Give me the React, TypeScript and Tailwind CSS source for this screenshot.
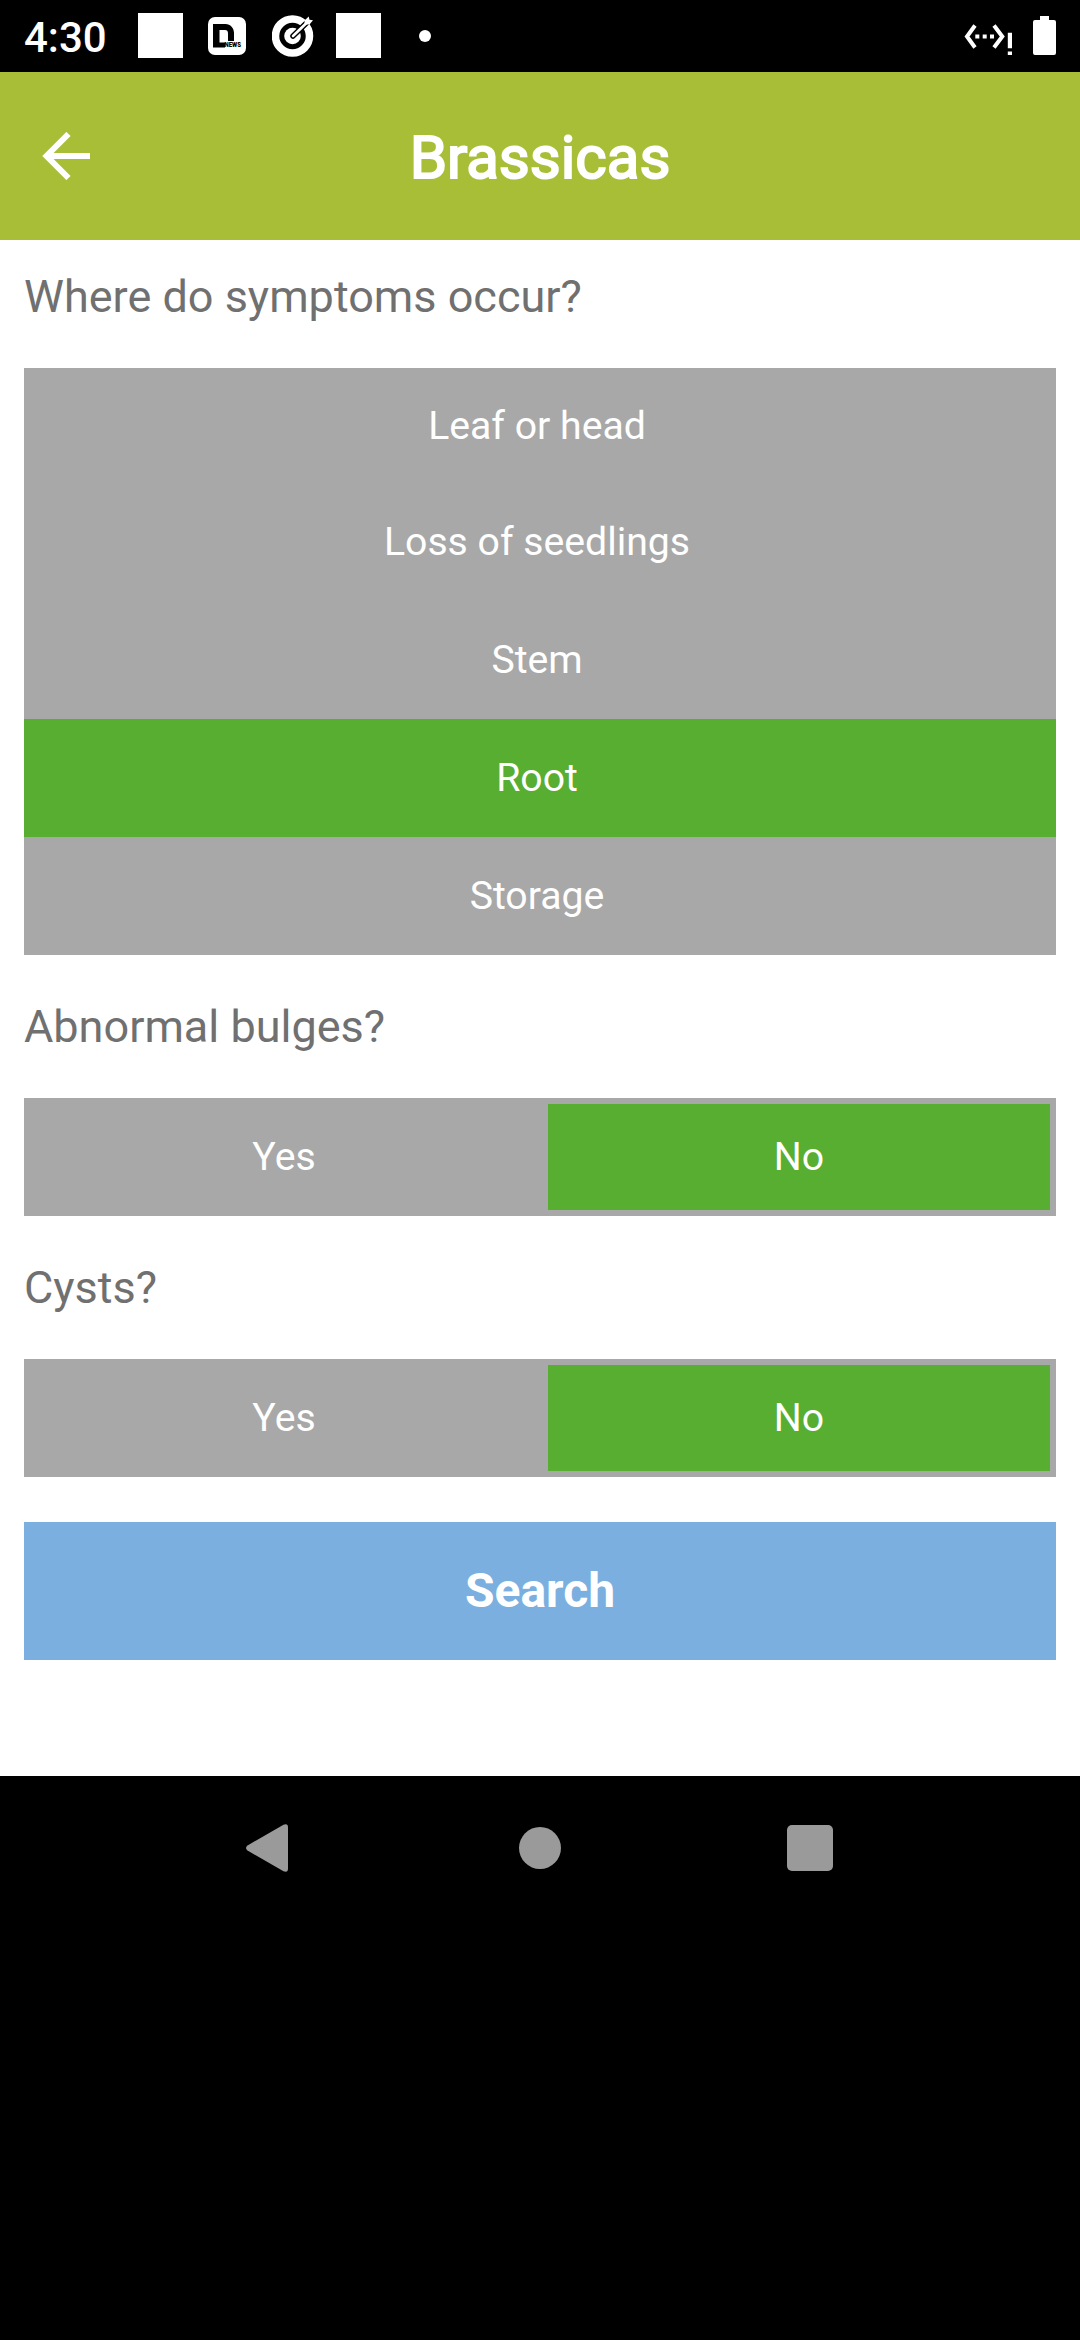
import { useState } from "react";
import clsx from "clsx";

function StatusBar() {
  return (
    <div className="flex h-[72px] items-center justify-between bg-black px-6 text-white">
      <div className="flex items-center">
        <span className="w-[114px] pt-1 text-[42px] font-medium leading-[68px]">4:30</span>
        <div className="mb-px size-[45px] bg-white" />
        <svg className="ml-[25px] size-[38px]" viewBox="0 0 38 38">
          <rect width="38" height="38" rx="7" fill="#fff" />
          <path d="M5 7h12.500c5 0 8.500 4 8.500 9v8h-6v-7.500c0-2.500-1-3.500-3-3.500h-5.500v12.500h5.500v5H5z" fill="#000" />
          <text x="16.500" y="30.300" fontSize="8" fontWeight="900" fontFamily="Roboto" textLength="16.500" lengthAdjust="spacingAndGlyphs" fill="#000">NEWS</text>
        </svg>
        <svg className="ml-[26px] size-[42px]" viewBox="0 0 42 42" fill="none">
          <circle cx="20.500" cy="21" r="17" stroke="#fff" strokeWidth="7.500" />
          <circle cx="20.500" cy="21" r="8.300" fill="#fff" />
          <path d="M21 21L36 6.500" stroke="#000" strokeWidth="5.500" strokeLinecap="round" />
          <path d="M21 21L35 7.500" stroke="#fff" strokeWidth="2.600" strokeLinecap="round" />
          <path d="M32.500 9.500V5.500l4.200-4 .8 3.200 3.500.6L37.500 9.500z" fill="#fff" />
        </svg>
        <div className="mb-px ml-[22px] size-[45px] bg-white" />
        <div className="ml-[38px] size-3 rounded-full bg-white" />
      </div>
      <div className="flex items-center">
        <svg className="h-10 w-[49px]" viewBox="0 0 49 40" fill="none">
          <path d="M11 9.500L3 20.500l8 11M30 9.500l8.300 11-8.300 11" stroke="#fff" strokeWidth="4" />
          <path d="M11.300 18.500h4v4h-4zM18.700 18.500h4v4h-4zM26 18.500h4v4h-4zM43.800 16.700h4.200v15.500h-4.200zM43.800 35.500h4.200v3.500h-4.200z" fill="#fff" />
        </svg>
        <svg className="mb-px ml-5 h-[39px] w-[23px]" viewBox="0 0 23 39">
          <path d="M7 0h9v4h5a2 2 0 0 1 2 2v31a2 2 0 0 1-2 2H2a2 2 0 0 1-2-2V6a2 2 0 0 1 2-2h5z" fill="#fff" />
        </svg>
      </div>
    </div>
  );
}

const locations = ["Leaf or head", "Loss of seedlings", "Stem", "Root", "Storage"];

function Question({ children }: { children: string }) {
  return <h2 className="h-[143px] text-[45px] leading-[143px]">{children}</h2>;
}

function Toggle() {
  const [yes, setYes] = useState(false);
  return (
    <div className="flex h-[118px] gap-1.5 bg-[#a8a8a8] py-1.5 pr-1.5 text-[39.2px] text-white">
      <button onClick={() => setYes(true)} className={clsx("w-[518px] pl-0.5", yes && "bg-[#57ae31]")}>Yes</button>
      <button onClick={() => setYes(false)} className={clsx("flex-1", !yes && "bg-[#57ae31]")}>No</button>
    </div>
  );
}

export default function App() {
  const [location, setLocation] = useState("Root");
  return (
    <div className="flex h-[2340px] w-[1080px] flex-col bg-black font-[Roboto,sans-serif]">
      <StatusBar />
      <header className="grid h-[168px] grid-cols-[1fr_auto_1fr] items-center bg-[#a8be36] text-white">
        <svg className="ml-[42px] size-12" viewBox="0 0 48 48" fill="none" stroke="#fff" strokeWidth="6">
          <path d="M26.500 2L4.500 24l22 22M4 24h44" />
        </svg>
        <h1 className="pt-1 text-[60px] font-normal leading-[72px] [-webkit-text-stroke:2px_white]">Brassicas</h1>
      </header>
      <main className="flex h-[1536px] flex-col bg-white px-6 text-[#707070]">
        <h2 className="h-[128px] text-[45px] leading-[114px]">Where do symptoms occur?</h2>
        <div className="flex flex-col bg-[#a8a8a8] text-[39.2px] text-white">
          {locations.map((name) => (
            <button
              key={name}
              onClick={() => setLocation(name)}
              className={clsx("h-[118px] pr-1.5 first:h-[115px] first:pt-0.5", name === location && "bg-[#57ae31]")}
            >
              {name}
            </button>
          ))}
        </div>
        <Question>Abnormal bulges?</Question>
        <Toggle />
        <Question>Cysts?</Question>
        <Toggle />
        <button className="mt-[45px] h-[138px] bg-[#7bafdf] text-[48px] font-bold text-white">Search</button>
      </main>
      <nav className="grid h-[144px] grid-cols-[270px_270px_270px] items-center justify-center justify-items-center bg-black">
        <svg className="mr-1.5 h-12 w-[42px]" viewBox="0 0 42 48">
          <path d="M1.500 21.500L37.500 0.700Q42-1 42 3.500v41q0 4.500-4.500 2.800L1.500 26.500Q-1.500 24 1.500 21.500z" fill="#9a9a9a" />
        </svg>
        <div className="size-[42px] rounded-full bg-[#9a9a9a]" />
        <div className="size-[46px] rounded-[5px] bg-[#9a9a9a]" />
      </nav>
    </div>
  );
}
